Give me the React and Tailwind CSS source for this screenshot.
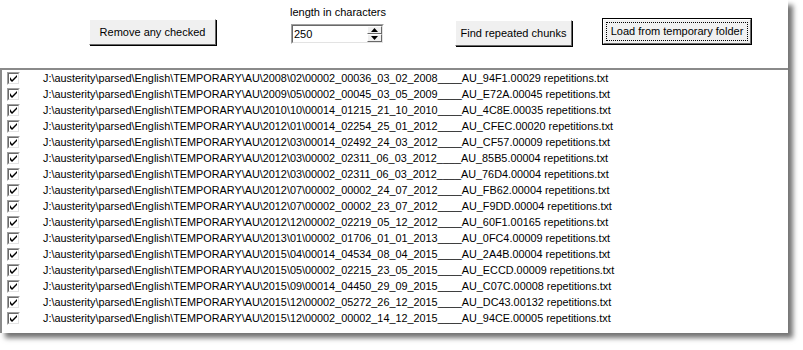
import React from 'react';

const FILES = [
  '2008\\02\\00002_00036_03_02_2008____AU_94F1.00029',
  '2009\\05\\00002_00045_03_05_2009____AU_E72A.00045',
  '2010\\10\\00014_01215_21_10_2010____AU_4C8E.00035',
  '2012\\01\\00014_02254_25_01_2012____AU_CFEC.00020',
  '2012\\03\\00014_02492_24_03_2012____AU_CF57.00009',
  '2012\\03\\00002_02311_06_03_2012____AU_85B5.00004',
  '2012\\03\\00002_02311_06_03_2012____AU_76D4.00004',
  '2012\\07\\00002_00002_24_07_2012____AU_FB62.00004',
  '2012\\07\\00002_00002_23_07_2012____AU_F9DD.00004',
  '2012\\12\\00002_02219_05_12_2012____AU_60F1.00165',
  '2013\\01\\00002_01706_01_01_2013____AU_0FC4.00009',
  '2015\\04\\00014_04534_08_04_2015____AU_2A4B.00004',
  '2015\\05\\00002_02215_23_05_2015____AU_ECCD.00009',
  '2015\\09\\00014_04450_29_09_2015____AU_C07C.00008',
  '2015\\12\\00002_05272_26_12_2015____AU_DC43.00132',
  '2015\\12\\00002_00002_14_12_2015____AU_94CE.00005',
];

const PREFIX = 'J:\\austerity\\parsed\\English\\TEMPORARY\\AU\\';

function Button({ label, width, isDefault }) {
  if (isDefault) {
    return (
      <div className={`border border-black ${width} h-[27px]`}>
        <div className="h-full w-full border border-t-white border-l-white border-r-[#696969] border-b-[#696969] bg-[#f0f0f0] p-[2px]">
          <div className="h-full w-full border border-dotted border-black flex items-center justify-center text-black">
            {label}
          </div>
        </div>
      </div>
    );
  }
  return (
    <div className={`${width} h-[26px] border border-t-white border-l-white border-r-[#696969] border-b-[#696969] bg-[#f0f0f0] flex items-center justify-center shadow-[1px_1px_0_#000]`}>
      {label}
    </div>
  );
}

function SpinBox() {
  return (
    <div className="flex flex-col items-start">
      <span className="leading-[13px] ml-[-1px] mb-[5px]">length in characters</span>
      <div className="w-[93px] h-[20px] border border-t-[#a0a0a0] border-l-[#a0a0a0] border-r-white border-b-white bg-white">
        <div className="h-full border border-t-[#696969] border-l-[#696969] border-r-[#e3e3e3] border-b-[#e3e3e3] flex items-center">
          <span className="pl-[1px] flex-1">250</span>
          <div className="flex flex-col w-[15px] h-full">
            <div className="flex-1 bg-[#f0f0f0] border border-t-white border-l-white border-r-[#696969] border-b-[#696969] flex items-center justify-center">
              <svg width="7" height="4" viewBox="0 0 7 4"><path d="M3.5 0L7 4H0z" fill="#000" /></svg>
            </div>
            <div className="flex-1 bg-[#f0f0f0] border border-t-white border-l-white border-r-[#696969] border-b-[#696969] flex items-center justify-center">
              <svg width="7" height="4" viewBox="0 0 7 4"><path d="M0 0h7L3.5 4z" fill="#000" /></svg>
            </div>
          </div>
        </div>
      </div>
    </div>
  );
}

function CheckBox() {
  return (
    <div className="w-[13px] h-[13px] border border-t-[#a0a0a0] border-l-[#a0a0a0] border-r-white border-b-white">
      <div className="w-full h-full border border-t-[#696969] border-l-[#696969] border-r-[#e3e3e3] border-b-[#e3e3e3] bg-white flex items-center justify-center">
        <svg width="7" height="7" viewBox="0 0 7 7">
          <path d="M0 2v3l2 2L7 2V0L2 5z" fill="#000" />
        </svg>
      </div>
    </div>
  );
}

export default function App() {
  return (
    <div className="w-[803px] h-[350px] bg-white text-[11px] text-black" style={{ fontFamily: '"Liberation Sans", Arial, sans-serif' }}>
      <div className="w-[788px] h-[333px] bg-white flex flex-col shadow-[5px_5px_5px_rgba(0,0,0,0.55)]">
        <div className="h-[68px] flex items-start pt-[6px]">
          <div className="ml-[89px] mt-[13px]">
            <Button label="Remove any checked" width="w-[127px]" />
          </div>
          <div className="ml-[75px]">
            <SpinBox />
          </div>
          <div className="ml-[69px] mt-[14px]">
            <Button label="Find repeated chunks" width="w-[117px]" />
          </div>
          <div className="ml-[30px] mt-[12px]">
            <Button label="Load from temporary folder" width="w-[150px]" isDefault />
          </div>
        </div>
        <div className="flex-1 border-t-2 border-l-2 border-[#8a8a8a]">
          {FILES.map((f, i) => (
            <div key={i} className="h-[16px] flex items-center">
              <div className="ml-[5px]">
                <CheckBox />
              </div>
              <span className="ml-[23px] whitespace-nowrap text-[10.85px]">{PREFIX + f} repetitions.txt</span>
            </div>
          ))}
        </div>
      </div>
    </div>
  );
}
